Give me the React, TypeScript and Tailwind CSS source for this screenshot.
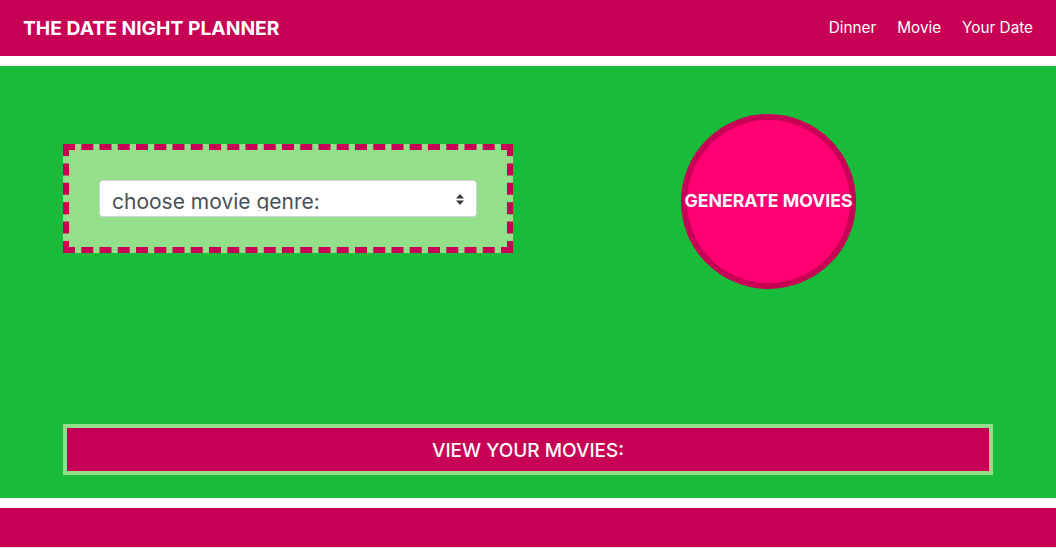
export default function App() {
    return (
        <div className="w-[1056px] h-[549px] bg-white font-['Inter','Liberation_Sans',sans-serif] overflow-hidden">
            <header className="h-14 bg-[#c70055] flex items-center justify-between pl-[23px] pr-[23px]">
                <h1 className="text-[19.3px] font-bold text-white">THE DATE NIGHT PLANNER</h1>
                <nav className="flex gap-[21px] text-white text-[15.3px]">
                    <a href="#">Dinner</a>
                    <a href="#">Movie</a>
                    <a href="#">Your Date</a>
                </nav>
            </header>

            <main className="mt-[10px] h-[432px] bg-[#19bb3a] px-[63px] pt-[48px]">
                <div className="flex items-start">
                    <div className="mt-[30px] w-[450px] h-[109px] bg-[#94df8a] border-[6px] border-dashed border-[#c70055] flex items-center pl-[30px]">
                        <div className="relative w-[378px] h-[37px] bg-white border border-[#ced4da] rounded-[4px]">
                            <div className="absolute left-[12px] top-[7px] h-[23px] overflow-hidden text-[21px] text-[#495057] leading-[28px] whitespace-nowrap">
                                choose movie genre:
                            </div>
                            <svg className="absolute right-[12px] top-[13px]" width="8" height="11" viewBox="0 0 8 11">
                                <path d="M0 4.5L4 0L8 4.5Z" fill="#343a40"/>
                                <path d="M0 6.5L4 11L8 6.5Z" fill="#343a40"/>
                            </svg>
                        </div>
                    </div>
                    <button className="ml-[168px] w-[175px] h-[175px] rounded-full bg-[#ff0072] border-[6px] border-[#c70055] text-white font-bold text-[17.7px] flex items-center justify-center whitespace-nowrap">
                        GENERATE MOVIES
                    </button>
                </div>

                <div className="mt-[135px] h-[51px] border-4 border-[#94df8a] bg-[#c70055] flex items-center justify-center pt-[3px] text-white text-[19px] font-medium">
                    VIEW YOUR MOVIES:
                </div>
            </main>

            <footer className="mt-[10px] h-10 bg-[#c70055] border-b border-[#e5e5e5]"></footer>
        </div>
    );
}
